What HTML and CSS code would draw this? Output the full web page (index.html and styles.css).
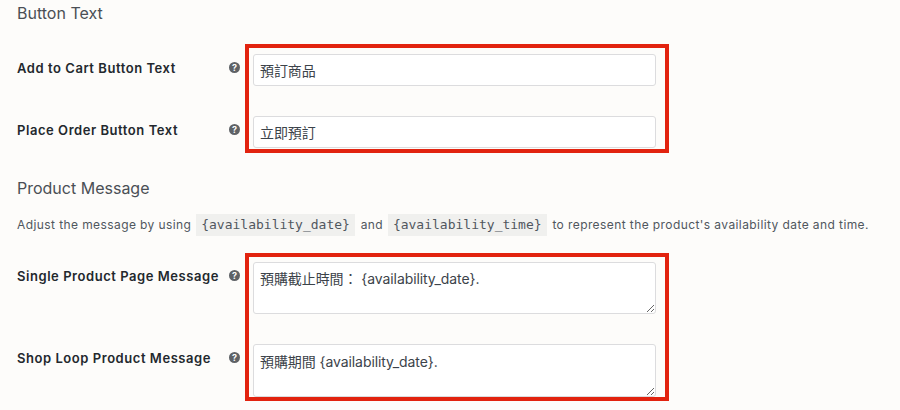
FILE: index.html
```html
<!DOCTYPE html>
<html lang="en">
<head>
    <meta charset="UTF-8">
    <meta name="viewport" content="width=device-width, initial-scale=1.0">
    <title>Pre-order Settings</title>
    <link rel="stylesheet" href="styles.css">
</head>
<body>

    <h3 class="section-title">Button Text</h3>

    <div class="field-group group-buttons">
        <div class="mark"></div>

        <div class="field-row row-cart">
            <label class="field-label" for="cartText">Add to Cart Button Text</label>
            <span class="help">?</span>
            <input class="text-input" type="text" id="cartText" value="預訂商品">
        </div>

        <div class="field-row row-order">
            <label class="field-label" for="orderText">Place Order Button Text</label>
            <span class="help">?</span>
            <input class="text-input" type="text" id="orderText" value="立即預訂">
        </div>
    </div>

    <h3 class="section-title title-message">Product Message</h3>

    <p class="note">Adjust the message by using <code>{availability_date}</code> and <code>{availability_time}</code> to represent the product's availability date and time.</p>

    <div class="field-group group-messages">
        <div class="mark"></div>

        <div class="field-row row-single">
            <label class="field-label" for="singleMsg">Single Product Page Message</label>
            <span class="help">?</span>
            <textarea class="text-area" id="singleMsg">預購截止時間： {availability_date}.</textarea>
        </div>

        <div class="field-row row-loop">
            <label class="field-label" for="loopMsg">Shop Loop Product Message</label>
            <span class="help">?</span>
            <textarea class="text-area" id="loopMsg">預購期間 {availability_date}.</textarea>
        </div>
    </div>

</body>
</html>
```

FILE: styles.css
```css
* {
    box-sizing: border-box;
}

html, body {
    height: 410px;
    overflow: hidden;
}

body {
    margin: 0;
    padding: 4px 0 0 17px;
    background-color: #fdfcfa;
    color: #3c434a;
    font-family: Inter, "Noto Sans CJK TC", sans-serif;
    font-size: 13px;
}

.section-title {
    margin: 0;
    font-size: 16px;
    font-weight: 400;
    line-height: 18px;
    color: #4a4f55;
}

.title-message {
    margin-top: 25px;
}

.field-group {
    position: relative;
}

.group-buttons {
    margin-top: 22px;
}

.group-messages {
    margin-top: 17px;
}

/* red annotation drawn over the screenshot */
.mark {
    position: absolute;
    left: 228px;
    width: 424px;
    top: 0;
    border: 4px solid #e2230f;
    pointer-events: none;
}

.group-buttons .mark {
    height: 109px;
}

.group-messages .mark {
    height: 148px;
}

.field-row {
    display: flex;
    align-items: flex-start;
}

.row-cart {
    padding-top: 10px;
}

.row-order {
    padding-top: 30px;
    padding-bottom: 6px;
}

.row-single {
    padding-top: 9px;
}

.row-loop {
    padding-top: 30px;
    padding-bottom: 5px;
}

.field-label {
    width: 212px;
    flex-shrink: 0;
    padding-top: 7px;
    font-weight: 600;
    font-size: 13px;
    line-height: 15px;
    color: #23282d;
    letter-spacing: 0.55px;
    white-space: nowrap;
}

.help {
    width: 11px;
    height: 11px;
    flex-shrink: 0;
    margin-top: 8px;
    border-radius: 50%;
    background-color: #5f6266;
    color: #fdfcfa;
    font-size: 9px;
    font-weight: 700;
    line-height: 11px;
    text-align: center;
}

.text-input, .text-area {
    display: block;
    width: 403px;
    margin-left: 13px;
    padding: 0 6px;
    border: 1px solid #dcdcde;
    border-radius: 3px;
    background-color: #fff;
    color: #3c434a;
    font-family: Inter, "Noto Sans CJK TC", sans-serif;
    font-size: 14px;
    letter-spacing: -0.08px;
}

.text-input {
    height: 32px;
}

.text-area {
    height: 52px;
    padding-top: 7px;
    line-height: 18px;
}

.row-loop .text-area {
    height: 53px;
    padding-top: 8px;
}

.note {
    margin: 17px 0 0;
    font-size: 12px;
    line-height: 22px;
    color: #50575e;
    letter-spacing: 0.41px;
    white-space: nowrap;
}

.note code {
    display: inline-block;
    padding: 0 5px;
    margin: 0 2px 0 1px;
    background-color: #f0f0ee;
    font-family: "DejaVu Sans Mono", monospace;
    font-size: 13px;
    letter-spacing: 0;
}
```
